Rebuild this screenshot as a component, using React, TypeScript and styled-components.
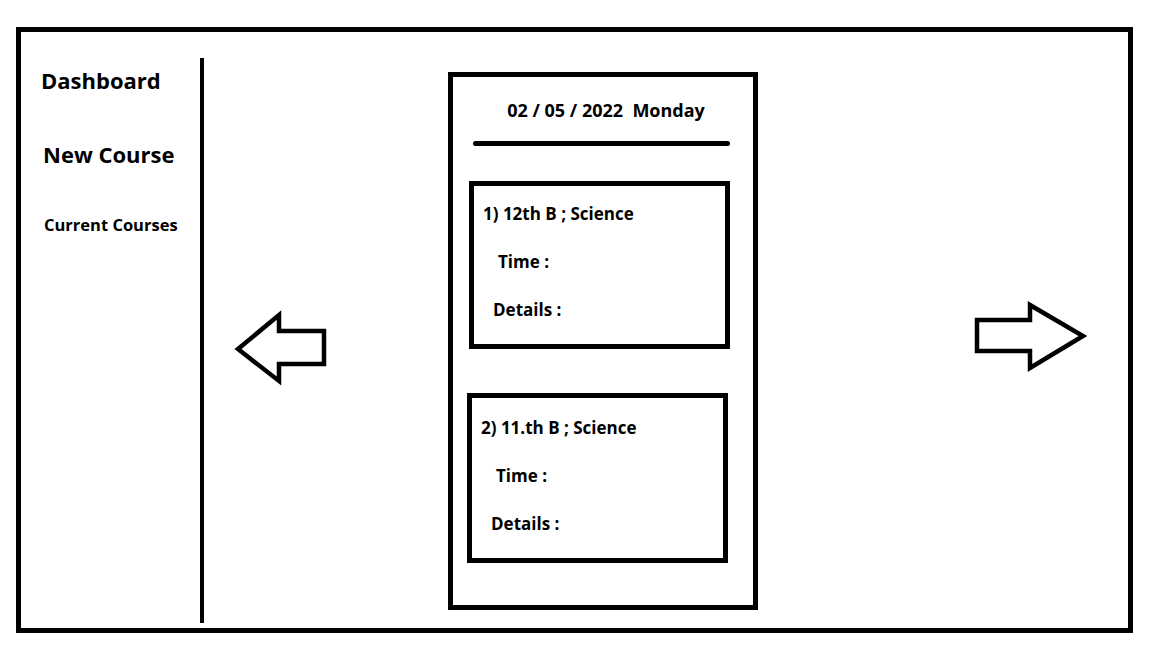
import React from 'react';
import styled, { createGlobalStyle } from 'styled-components';

const GlobalStyle = createGlobalStyle`
  html, body {
    margin: 0;
    padding: 0;
    background: #ffffff;
  }
  body {
    font-family: "Open Sans", "Liberation Sans", sans-serif;
    color: #000;
  }
`;

const Frame = styled.div`
  box-sizing: border-box;
  margin: 27px 0 0 16px;
  width: 1117px;
  height: 606px;
  border: 5px solid #000;
  display: flex;
  align-items: stretch;
`;

const Sidebar = styled.nav`
  box-sizing: border-box;
  width: 183px;
  margin: 26px 0 5px 0;
  padding: 9px 0 0 20px;
  border-right: 4px solid #000;
  display: flex;
  flex-direction: column;
  align-items: flex-start;
`;

const NavItem = styled.div<{ $size: number; $top: number; $shift?: number }>`
  font-size: ${(p) => p.$size}px;
  font-weight: 700;
  line-height: 1.2;
  margin-top: ${(p) => p.$top}px;
  margin-left: ${(p) => p.$shift ?? 0}px;
  white-space: nowrap;
`;

const Main = styled.main`
  flex: 1;
  display: flex;
  align-items: flex-start;
`;

const ArrowSvg = styled.svg<{ $left: number; $top: number }>`
  flex: none;
  margin-left: ${(p) => p.$left}px;
  margin-top: ${(p) => p.$top}px;
  overflow: visible;
`;

const DayPanel = styled.section`
  box-sizing: border-box;
  flex: none;
  width: 310px;
  height: 538px;
  margin: 40px 0 0 120px;
  border: 5px solid #000;
  display: flex;
  flex-direction: column;
  align-items: flex-start;
`;

const DateTitle = styled.div`
  align-self: stretch;
  text-align: center;
  padding: 23px 0 0 6px;
  font-size: 18px;
  font-weight: 700;
  line-height: 1.2;
  white-space: pre;
`;

const Rule = styled.div`
  width: 257px;
  height: 5px;
  margin: 19px 0 0 20px;
  background: #000;
  border-radius: 3px;
`;

const Card = styled.article<{ $top: number; $left: number; $height: number; $pad: number }>`
  box-sizing: border-box;
  width: 261px;
  height: ${(p) => p.$height}px;
  margin: ${(p) => p.$top}px 0 0 ${(p) => p.$left}px;
  border: 5px solid #000;
  padding: ${(p) => p.$pad}px 0 0 9px;
`;

const CardLine = styled.div<{ $indent?: number; $top?: number }>`
  font-size: 17px;
  font-weight: 700;
  line-height: 20px;
  margin-top: ${(p) => p.$top ?? 0}px;
  padding-left: ${(p) => p.$indent ?? 0}px;
  white-space: nowrap;
`;

const LeftArrow = () => (
  <ArrowSvg $left={27} $top={277} width={97} height={78} viewBox="0 0 97 78">
    <polygon
      points="7,40 48,6 48,22 93,22 93,55 48,55 48,72"
      fill="none"
      stroke="#000"
      strokeWidth={4.5}
      strokeLinejoin="miter"
    />
  </ArrowSvg>
);

const RightArrow = () => (
  <ArrowSvg $left={215} $top={269} width={116} height={72} viewBox="0 0 116 72">
    <polygon
      points="4,19 57,19 57,4 110,35 57,67 57,50 4,50"
      fill="none"
      stroke="#000"
      strokeWidth={4.5}
      strokeLinejoin="miter"
    />
  </ArrowSvg>
);

interface Lesson {
  title: string;
  top: number;
  left: number;
  height: number;
  pad: number;
}

const lessons: Lesson[] = [
  { title: '1) 12th B ; Science', top: 35, left: 16, height: 168, pad: 18 },
  { title: '2) 11.th B ; Science', top: 44, left: 14, height: 170, pad: 20 },
];

export default function App() {
  return (
    <>
      <GlobalStyle />
      <Frame>
        <Sidebar>
          <NavItem $size={22} $top={0}>Dashboard</NavItem>
          <NavItem $size={22} $top={48} $shift={2}>New Course</NavItem>
          <NavItem $size={16.5} $top={47} $shift={3}>Current Courses</NavItem>
        </Sidebar>
        <Main>
          <LeftArrow />
          <DayPanel>
            <DateTitle>{'02 / 05 / 2022  Monday'}</DateTitle>
            <Rule />
            {lessons.map((l) => (
              <Card key={l.title} $top={l.top} $left={l.left} $height={l.height} $pad={l.pad}>
                <CardLine>{l.title}</CardLine>
                <CardLine $indent={15} $top={28}>Time :</CardLine>
                <CardLine $indent={10} $top={28}>Details :</CardLine>
              </Card>
            ))}
          </DayPanel>
          <RightArrow />
        </Main>
      </Frame>
    </>
  );
}
